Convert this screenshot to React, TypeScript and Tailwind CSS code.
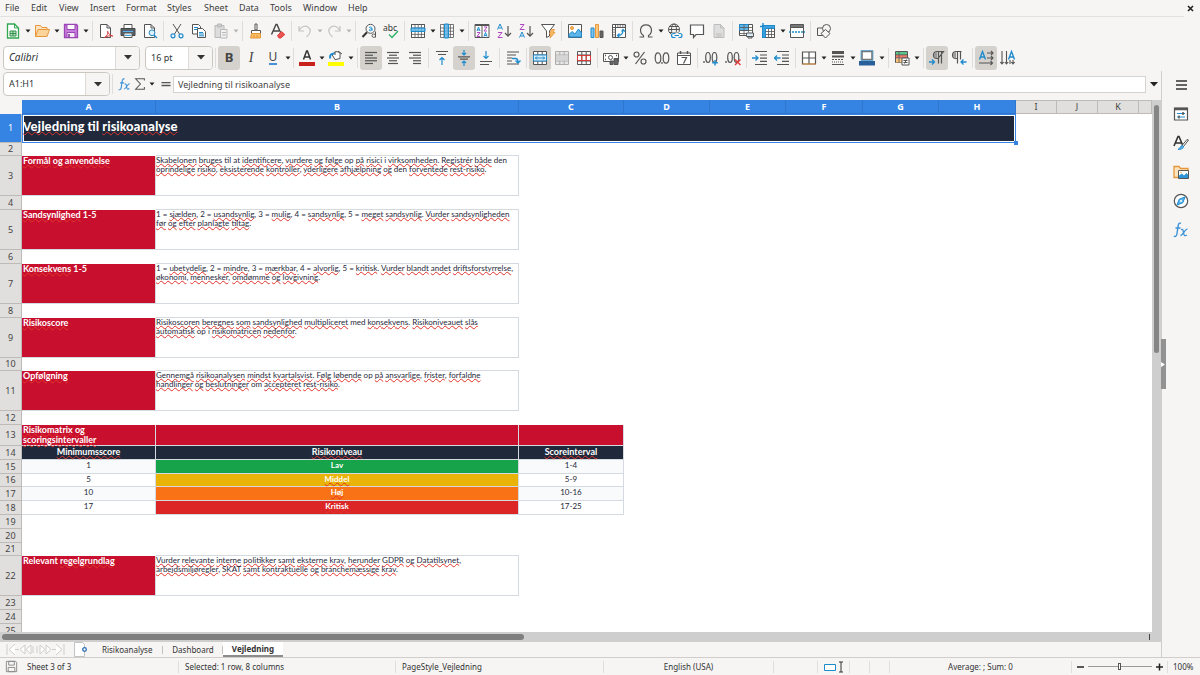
import type { ReactNode } from "react";

const INK = "#555555";
const BLUE = "#1e8bcd";
const PURPLE = "#b146c2";

function Icon({ children, size = 16 }: { children: ReactNode; size?: number }) {
  return (
    <svg width={size} height={size} viewBox="0 0 16 16" fill="none" stroke={INK} strokeWidth="1" aria-hidden="true" className="shrink-0">
      {children}
    </svg>
  );
}

function Caret({ muted = false }: { muted?: boolean }) {
  return (
    <svg width="6" height="4" viewBox="0 0 6 4" aria-hidden="true" className="shrink-0">
      <path d="M.5 .5h5L3 3.6z" fill={muted ? "#b5b5b5" : "#222"} />
    </svg>
  );
}

const align = (rows: [number, number][]) => rows.map(([x, w], i) => <path key={i} d={`M${x} ${2.5 + i * 2.75}h${w}`} strokeWidth="1.2" />);
const gridLines = "M1.5 1.5h13v13h-13zM1.5 5h13M1.5 8.2h13M1.5 11.4h13M5 1.5v13M8.2 1.5v13M11.4 1.5v13";

const icons: Record<string, ReactNode> = {
  new: (<><path d="M2.500 1h7l4 4v10h-11z" stroke="#32a852" fill="#fff" strokeWidth="1.300" /><path d="M9.500 1v4h4" stroke="#32a852" /><path d="M5 8h6v5H5zM5 10.500h6M8 8v5" stroke="#2f8f48" fill="#bfe5c8" /></>),
  open: (<><path d="M1.500 13.500v-11h5l1.500 2h5v3" stroke="#e8963a" fill="#fbe3c0" /><path d="M1.500 13.500l2.500-7h11.500l-2.500 7z" stroke="#e8963a" fill="#fbd49b" /></>),
  save: (<><path d="M1.500 1.500h12l1 1v12h-13z" stroke="#9b45b5" fill="#c77ddb" strokeWidth="1.300" /><path d="M4 1.500h8v5H4z" fill="#fff" stroke="#9b45b5" /><path d="M4 9.500h8v5H4z" fill="#f5e8f8" stroke="#9b45b5" /><path d="M6 11v3" stroke="#7a2f92" strokeWidth="1.500" /></>),
  pdf: (<><path d="M2.500 1.500h6.500l3.500 3.500v9.500h-10z" fill="#fff" /><path d="M9 1.500V5h3.500" /><path d="M6.500 14.500C9 13 10.500 10 9.800 8.500s-1 2.500 5 4.500c-3-.6-6 0-8.300 1.500z" stroke="#d83b3b" /></>),
  print: (<><path d="M4 5.500v-4h8v4" fill="#fff" /><path d="M1 5.500h14v7H1z" fill="#55606b" stroke="#444" /><path d="M3 8.500h10" stroke="#5bb2e8" /><path d="M4 10h8v4.500H4z" fill="#fff" /><path d="M5 12.300h6" stroke={BLUE} /></>),
  preview: (<><path d="M2.500 1.500h6.500l3.500 3.500v9.500h-10z" fill="#fff" /><path d="M9 1.500V5h3.500" /><circle cx="10" cy="9.800" r="2.900" fill="#dff0fb" stroke={BLUE} /><path d="M12 12l3 3" stroke={BLUE} strokeWidth="1.300" /></>),
  cut: (<><path d="M4 1l6.500 10M12 1L5.500 11" /><circle cx="4" cy="12.800" r="2" stroke={BLUE} strokeWidth="1.200" /><circle cx="12" cy="12.800" r="2" stroke={BLUE} strokeWidth="1.200" /></>),
  copy: (<><path d="M1.500 1.500h6l2 2v7.500h-8z" fill="#fff" /><path d="M3 4.500h4M3 6.500h4" stroke={BLUE} /><path d="M6.500 5.500h5l3 3v6h-8z" fill="#fff" /><path d="M8 9.500h4M8 11h5M8 12.800h5" stroke={BLUE} /></>),
  paste: (<><path d="M2 2.500h9v12H2z" fill="#ddd" stroke="#b9b9b9" /><path d="M4.500 1h4v3h-4z" fill="#ccc" stroke="#b9b9b9" /><path d="M7.500 6.500h6.500v8.500H7.500z" fill="#f2f2f2" stroke="#b9b9b9" /><path d="M9 9.500h4M9 12h4" stroke="#b9b9b9" /></>),
  clone: (<><path d="M7 1h2v6H7z" fill="#fff" /><path d="M3.500 7.500h9v3h-9z" fill="#fff" /><path d="M3.500 10.500L2.500 15h10v-4.500z" fill="#f9bd63" stroke="#e8963a" /><path d="M6 12v3M9 12v3" stroke="#e8963a" /></>),
  clear: (<><path d="M1.500 11.500L6 1.500h1L10.500 9.500M3.500 8h5.500" strokeWidth="1.400" stroke="#444" /><path d="M7.500 12.500l4-4 3.300 3-4 3.500H9z" fill="#ee5555" stroke="#d83b3b" /></>),
  undo: (<path d="M2 3v5h5M2.200 7.500C4 3.500 8 2 11 4s3.500 6-1.500 10" stroke="#c4c4c4" strokeWidth="1.200" />),
  redo: (<path d="M14 3v5H9M13.800 7.500C12 3.500 8 2 5 4S1.500 10 6.500 14" stroke="#c4c4c4" strokeWidth="1.200" />),
  find: (<><circle cx="9.500" cy="5.800" r="4.500" fill="#fff" /><path d="M6 9.300L1.500 14" strokeWidth="2" stroke="#333" /><path d="M8 4.500c2-1 3-.3 3 1v2.300M11 5.800c-3-.3-3.500 2 -1.800 2 .8 0 1.800-.6 1.800-1.500" stroke={BLUE} /><path d="M14.500 8.500v6M14.500 12c-.5-1.600-3.500-1.300-3.500.7s3 2.200 3.500.6" /></>),
  spell: (<><text x="0" y="7.500" fontSize="8.500" fill="#333" stroke="none" fontFamily="Noto Sans, sans-serif">abc</text><path d="M6 11.500l3 3 6-6.500" stroke="#32b36a" strokeWidth="1.400" /></>),
  row: (<><path d="M1.500 1.500h13v13h-13z" fill="#fff" /><path d={gridLines} strokeWidth=".8" /><path d="M1 5h14v3.500H1z" fill="#5db5ea" fillOpacity=".8" stroke={BLUE} /></>),
  col: (<><path d={gridLines} strokeWidth=".8" fill="#fff" /><path d="M5.500 1h4v14h-4z" fill="#5db5ea" fillOpacity=".85" stroke={BLUE} /></>),
  sort: (<><path d="M1 1.500h14v13H1zM8 1.500v13" fill="#fff" /><path d="M1 2h14" strokeWidth="2" /><path d="M3 8l1.500-4L6 8M3.500 7h2" stroke={BLUE} /><path d="M3 9.500h3l-3 4h3" stroke={PURPLE} /><path d="M10 4h3l-3 4h3" stroke={PURPLE} /><path d="M10 13.500l1.500-4 1.500 4M10.500 12.500h2" stroke={BLUE} /></>),
  asc: (<><path d="M1.500 6.500L4 1l2.500 5.500M2.500 5h3" stroke={BLUE} /><path d="M2 9.500h4l-4 5h4.500" stroke={PURPLE} /><path d="M12 3v10M9 10l3 3.200L15 10" strokeWidth="1.200" /></>),
  desc: (<><path d="M2 1.500h4l-4 5h4.500" stroke={PURPLE} /><path d="M1.500 14.500L4 9l2.500 5.500M2.500 13h3" stroke={BLUE} /><path d="M12 3v10M9 10l3 3.200L15 10" strokeWidth="1.200" /></>),
  filter: (<><path d="M1.500 1.500h13L9.500 8v5l-3 1.500V8z" fill="#fff" /><path d="M11.500 6.500h3l-1.500 3h2l-5 5.500 1-4h-1.500z" fill="#f9bd63" stroke="#e8963a" strokeWidth=".8" /></>),
  image: (<><path d="M1.500 1.500h13v13h-13z" fill="#fff" /><circle cx="5" cy="5" r="1.500" fill="#f9bd63" stroke="#e8963a" /><path d="M2 14v-2.500l3-3 3 2.500 3.500-5 3 4V14z" fill="#5db5ea" stroke={BLUE} /></>),
  chart: (<><path d="M2 5h3v9.500H2z" fill="#7cc3ee" stroke={BLUE} /><path d="M6.500 1.500h3v13h-3z" fill="#fbc77e" stroke="#e8963a" /><path d="M11 8h3v6.500h-3z" fill="#666" /></>),
  pivot: (<><path d="M1.500 1.500h13v13h-13zM1.500 4.500h13M4.500 1.500v13" fill="#fff" /><path d="M6 3h8M3 6v8" strokeDasharray="1.500 1" /><path d="M7 12.500c3.500 0 5-1.500 5-5.500M10.500 8.500L12 6.500l2 2M8.500 10.500l-2 2 2 2" stroke={BLUE} strokeWidth="1.200" /></>),
  omega: (<path d="M1.500 14h4v-1.500C1 10 1.500 1.800 8 1.800S15 10 10.500 12.500V14h4" strokeWidth="1.200" />),
  link: (<><circle cx="7" cy="6.500" r="5.500" /><ellipse cx="7" cy="6.500" rx="2.500" ry="5.500" /><path d="M1.500 6.500h11M2.500 3.500h9M2.500 9.500h9" /><path d="M5 9.500h10.500v6H4z" fill="#f6f5f4" stroke="none" /><path d="M8.500 10.500H6.500a2 2 0 000 4h2M11.500 10.500H13a2 2 0 010 4h-1.500M7.500 12.500h4.500" stroke={BLUE} strokeWidth="1.200" /></>),
  comment: (<path d="M1.500 2h13v9.500H7L4.500 14.500v-3h-3z" fill="#fff" strokeWidth="1.200" />),
  header: (<><path d="M3 1.500h6.500L13 5v9.500H3z" fill="#dedede" stroke="#bdbdbd" /><path d="M9.500 1.500V5H13M5 11h6M5 13h6" stroke="#bdbdbd" /></>),
  printarea: (<><path d="M1.500 1.500h13v11h-13z" fill="#fff" /><path d="M1.500 1.500h9v6h-9z" fill="#5db5ea" stroke={BLUE} /><path d="M1.500 4.500h13M1.500 7.500h13M1.500 10.500h8M6 1.500v11M10.500 1.500v8" strokeWidth=".8" /><path d="M8.500 10h7v3.500h-7zM10 13.500h4V15h-4z" fill="#d9ecf8" /></>),
  freeze: (<><path d="M2.500 2.500h12v12h-12z" fill="#fff" /><path d="M2.500 2.500h12v3h-9v9h-3z" fill="#3a9fdf" stroke={BLUE} /><path d="M5.500 8.500h9M5.500 11.500h9M8.500 5.500v9M11.500 5.500v9M14.500 5.500v9h-9" strokeWidth=".8" /><path d="M0 3.500h4M3 0v4" stroke={BLUE} strokeWidth="1.400" /></>),
  split: (<><path d="M1.500 4.500v10h13v-10" fill="#fff" /><path d="M1.500 1.500h13v3h-13z" fill="#777" /><path d="M0 9h16" stroke={BLUE} strokeDasharray="2 1" strokeWidth="1.300" /></>),
  shapes: (<><path d="M1.500 5h8v7.500h-8z" /><circle cx="10.500" cy="5.500" r="4" fill="#f6f5f4" /><path d="M9.500 6.500l4.500 4-4.500 4.500L5 10.500z" fill="#f6f5f4" /></>),
  fontcolor: (<><path d="M4.500 9.500L7.600 1h.8l3.100 8.500M5.500 7h5" strokeWidth="1.500" stroke="#333" /><path d="M0 12h16v4H0z" fill="#c9211e" stroke="none" /></>),
  highlight: (<><path d="M4 4.500l4-3 4 1v6l-5 1.200z" fill="#fff" /><path d="M7 5V1.500M10 1l4 3" /><path d="M2.200 8.500C1.500 5 3 3.500 6.500 3.500" stroke={BLUE} strokeWidth="2" /><path d="M0 12h16v4H0z" fill="#ffff00" stroke="none" /></>),
  left: align([[2, 12], [2, 8], [2, 12], [2, 12], [2, 8]]),
  center: align([[2, 12], [4, 8], [2, 12], [4, 8], [3, 10]]),
  right: align([[2, 12], [6, 8], [2, 12], [6, 8], [6, 8]]),
  top: (<><path d="M2 1.500h12M4 4.500h8" strokeWidth="1.200" /><path d="M8 15V7.500M5.500 10L8 7.500l2.500 2.500" stroke={BLUE} strokeWidth="1.200" /></>),
  middle: (<><path d="M2 6.800h12M4 9.200h8" strokeWidth="1.200" /><path d="M8 0v5M6 3l2 2 2-2M8 16v-5M6 13l2-2 2 2" stroke={BLUE} strokeWidth="1.200" /></>),
  bottom: (<><path d="M2 11.500h12M2 14.500h9" strokeWidth="1.200" /><path d="M8 1v7.500M5.500 6L8 8.500 10.500 6" stroke={BLUE} strokeWidth="1.200" /></>),
  wrap: (<><path d="M2 2h12M2 5h9M2 8h5M2 11h5M2 14h12" strokeWidth="1.200" /><path d="M7 8.500h3.500q2.500 0 2.500 3.500M10.500 10.500L13 13l2.500-2.500" stroke={BLUE} strokeWidth="1.300" /></>),
  merge: (<><path d="M1.500 1.500h13v13h-13zM1.500 5h13M1.500 11h13M5.800 1.500V5M10.200 1.500V5M5.800 11v3.500M10.200 11v3.500" fill="#fff" /><path d="M1.500 5h13v6h-13z" fill="#d9ecf8" stroke={BLUE} /><path d="M3 8h10M5 6.500L3.500 8 5 9.500M11 6.500L12.500 8 11 9.500" stroke={BLUE} /></>),
  mergecells: (<><path d="M1.500 1.500h13v13h-13zM1.500 5h13M1.500 11h13M5.800 1.500V5M10.200 1.500V5M5.800 11v3.500M10.200 11v3.500" fill="#e6e6e6" stroke="#adadad" /><path d="M2 5.500h12v5H2z" fill="#d5d5d5" stroke="none" /></>),
  unmerge: (<><path d="M1.500 1.500h13v13h-13zM1.500 5h13M1.500 11h13M5.800 1.500v13M10.200 1.500v13" fill="#fff" /><path d="M1.500 5.500h13v5h-13zM5.800 5.500v5M10.200 5.500v5" stroke="#d83b3b" /></>),
  currency: (<><path d="M.5 3.500h15v8H.5z" fill="#fff" /><path d="M2 5.500h1M13 5.500h1M2 9.500h1" strokeWidth="1.500" /><circle cx="7.500" cy="7.500" r="2" /><path d="M7 11h3v3.500H7zM11 8.500h4v6h-4z" fill="#666" /></>),
  percent: (<><circle cx="4.500" cy="4.500" r="2.500" strokeWidth="1.200" /><circle cx="11.500" cy="11.500" r="2.500" strokeWidth="1.200" /><path d="M12.500 2l-9 12" strokeWidth="1.200" /></>),
  number: (<><ellipse cx="4" cy="8" rx="2.800" ry="5.200" strokeWidth="1.200" /><ellipse cx="12" cy="8" rx="2.800" ry="5.200" strokeWidth="1.200" /><path d="M8 12v2" strokeWidth="1.200" /></>),
  date: (<><path d="M1.500 3h13v11.500h-13zM1.500 5.500h13" fill="#fff" /><path d="M4.500 1v3M11.500 1v3" strokeWidth="1.500" /><path d="M5.500 7.500h5l-3 6" strokeWidth="1.200" /></>),
  adddec: (<><path d="M1 11v2" strokeWidth="1.300" /><ellipse cx="5" cy="7.500" rx="2.300" ry="5" strokeWidth="1.200" /><ellipse cx="11.500" cy="7.500" rx="2.300" ry="5" strokeWidth="1.200" /><path d="M12 10v5.500M9.200 12.700h5.600" stroke={BLUE} strokeWidth="1.400" /></>),
  deldec: (<><path d="M1 11v2" strokeWidth="1.300" /><ellipse cx="5" cy="7.500" rx="2.300" ry="5" strokeWidth="1.200" /><ellipse cx="11.500" cy="7.500" rx="2.300" ry="5" strokeWidth="1.200" /><path d="M10 9.500l5.500 5.500M15.500 9.500L10 15" stroke="#e03c3c" strokeWidth="1.400" /></>),
  indent: (<><path d="M3 1.500h12M8 5h7M8 8.200h7M8 11.400h7M3 14.500h12" strokeWidth="1.200" /><path d="M0 8h6M3.500 5.500L6 8l-2.500 2.500" stroke={BLUE} strokeWidth="1.300" /></>),
  outdent: (<><path d="M3 1.500h12M8 5h7M8 8.200h7M8 11.400h7M3 14.500h12" strokeWidth="1.200" /><path d="M6.500 8h-6M3 5.500L.5 8 3 10.500" stroke={BLUE} strokeWidth="1.300" /></>),
  borders: (<><path d="M1.500 2h13v12h-13zM8 2v12M1.500 8h13" fill="#fff" strokeWidth="1.200" /><path d="M1.500 14h13" stroke="#e8963a" /></>),
  linestyle: (<><path d="M2 2.500h12" strokeWidth="3" /><path d="M2 6.500h12" strokeWidth="2" /><path d="M2 9.500h12" strokeDasharray="2 1" /><path d="M2 12h12" strokeDasharray="1 1" /><path d="M2 14.500h12" /></>),
  linecolor: (<><path d="M3 1.500h10v8H3z" fill="#fff" stroke="#777" strokeWidth="1.600" /><path d="M2 .5h12v10H2z" stroke={BLUE} strokeWidth=".6" /><path d="M0 11h16v4.500H0z" fill="#2a6099" stroke="none" /></>),
  cond: (<><path d="M1.500 1.500h12v11h-12z" fill="#fff" /><path d="M2 2h11v3H2z" fill="#58c68a" stroke="none" /><path d="M2 5h11v3H2z" fill="#ee7a6a" stroke="none" /><path d="M2 8.500h6v4H2z" fill="#fbc77e" stroke="none" /><path d="M1.500 4.800h12M1.500 8h12M5 1.500v11" strokeWidth=".8" /><path d="M8 8h7v7H8z" fill="#fff" /><path d="M9.500 10.500h4M9.500 12.500h4M12.500 9.500l-2 4" /></>),
  ltr: (<><path d="M14.500 1.500H8a3.200 3.200 0 000 7h1zM9.500 1.500v12M12.500 1.500v12" strokeWidth="1.200" /><path d="M8 2v6C4 8 4 2 8 2z" fill="#999" stroke="none" /><path d="M0 12h5M3 9.500L5.500 12 3 14.500" stroke={BLUE} strokeWidth="1.300" /></>),
  rtl: (<><path d="M10.500 1.500H5a3.200 3.200 0 000 7h1M6.500 1.500v12M9.500 1.500v8" strokeWidth="1.200" /><path d="M5 2v6C1 8 1 2 5 2z" fill="#999" stroke="none" /><path d="M15.500 12h-5M12.500 9.500L10 12l2.500 2.500" stroke={BLUE} strokeWidth="1.300" /></>),
  texth: (<><path d="M1.500 9.500L4.500 1.500 7.500 9.500M2.500 7h4" stroke={BLUE} strokeWidth="1.400" /><path d="M9 3h6M13 1l2 2-2 2M9 8h6M13 6l2 2-2 2M1 13h13.500M12.500 11l2 2-2 2" strokeWidth="1.100" /></>),
  textv: (<><path d="M8.500 9.500l3-8 3 8M9.500 7h4" stroke={BLUE} strokeWidth="1.400" /><path d="M2 1v13M.3 12L2 14l1.700-2M6.500 1v13M4.800 12l1.700 2 1.700-2M13 10v4M11.300 12l1.700 2 1.700-2M10 10v4" strokeWidth="1.100" /></>),
  props: (<><path d="M1.500 2h13v12h-13z" fill="#fff" strokeWidth="1.200" /><path d="M1.500 3h13" strokeWidth="2.500" /><path d="M4 7.500h8M4 11h8" stroke={BLUE} /><path d="M10 6v3M6 9.500v3" strokeWidth="1.500" /></>),
  styles: (<><path d="M1 11L5 1.500h1L10 11M2.500 8h6" strokeWidth="1.600" stroke="#333" /><path d="M15.500 5l-5 6.500-1.500-1 5-6z" fill="#fff" /><path d="M9.500 10.500c2 1 1 4-4.500 4 2-.8 2-3.500 4.500-4z" fill="#5db5ea" stroke={BLUE} /></>),
  gallery: (<><path d="M1 13.500v-11h5l1.500 2H15v9z" fill="#fbe3c0" stroke="#e8963a" strokeWidth="1.300" /><path d="M5.500 6.500h10v8h-10z" fill="#fff" /><path d="M6 14v-2.500l3-2 2 2L13.500 9l1.500 1.500V14z" fill="#2f93d6" stroke="none" /><circle cx="8" cy="8.500" r=".8" fill="#f9bd63" stroke="none" /></>),
  navigator: (<><circle cx="8" cy="8" r="6.700" fill="#fff" strokeWidth="1.200" /><path d="M12 4L9.800 9.800 4 12l2.200-5.800z" fill="#5db5ea" stroke={BLUE} /><circle cx="8" cy="8" r="1" fill="#fff" stroke="none" /></>),
  fx: (<><path d="M8 1.300C5.500.3 5.200 3 4.800 6L4 11.500C3.700 14 2.700 15 .8 14.200M2.500 6h5" stroke="#3d93d8" strokeWidth="1.400" /><path d="M8 7.500c2-.5 2 0 2.500 3s1 4 3.500 2.500M14.500 7.200C12 6.500 11 12 7.500 13.700" stroke="#3d93d8" strokeWidth="1.300" /></>),
  sigma: (<path d="M13 4V2H3l5.500 6L3 14h10v-2.500" strokeWidth="1.200" />),
  equals: (<path d="M2 6.200h12M2 10h12" strokeWidth="1.700" />),
  menu: (<path d="M3 4h11M3 8h11M3 12h11" strokeWidth="1.700" stroke="#333" />),
  disk: (<><path d="M2.500 2.500h10l1 1v10h-11z" stroke="#8a8a8a" /><path d="M5 2.500h6v4H5zM4.500 9h7v4.500h-7z" stroke="#8a8a8a" /></>),
};

type Tool = { icon: string; label: string; drop?: boolean; muted?: boolean; active?: boolean };
const t = (icon: string, label: string, drop = false, flags: Partial<Tool> = {}): Tool => ({ icon, label, drop, ...flags });

const standardBar: Tool[][] = [
  [t("new", "New", true), t("open", "Open", true), t("save", "Save", true)],
  [t("pdf", "Export as PDF"), t("print", "Print"), t("preview", "Print Preview")],
  [t("cut", "Cut"), t("copy", "Copy"), t("paste", "Paste", true, { muted: true })],
  [t("clone", "Clone Formatting"), t("clear", "Clear Formatting")],
  [t("undo", "Undo", true, { muted: true }), t("redo", "Redo", true, { muted: true })],
  [t("find", "Find and Replace"), t("spell", "Spelling")],
  [t("row", "Row", true), t("col", "Column", true)],
  [t("sort", "Sort"), t("asc", "Sort Ascending"), t("desc", "Sort Descending"), t("filter", "AutoFilter")],
  [t("image", "Insert Image"), t("chart", "Insert Chart"), t("pivot", "Pivot Table")],
  [t("omega", "Special Character", true), t("link", "Hyperlink"), t("comment", "Comment"), t("header", "Headers and Footers", false, { muted: true })],
  [t("printarea", "Print Area"), t("freeze", "Freeze Rows and Columns", true), t("split", "Split Window")],
  [t("shapes", "Draw Functions")],
];

const formatBar: Tool[][] = [
  [t("fontcolor", "Font Color", true), t("highlight", "Background Color", true)],
  [t("left", "Align Left", false, { active: true }), t("center", "Center"), t("right", "Align Right")],
  [t("top", "Align Top"), t("middle", "Center Vertically", false, { active: true }), t("bottom", "Align Bottom")],
  [t("wrap", "Wrap Text")],
  [t("merge", "Merge and Center", false, { active: true }), t("mergecells", "Merge Cells"), t("unmerge", "Unmerge Cells")],
  [t("currency", "Currency", true), t("percent", "Percent"), t("number", "Number"), t("date", "Date")],
  [t("adddec", "Add Decimal Place"), t("deldec", "Delete Decimal Place")],
  [t("indent", "Increase Indent"), t("outdent", "Decrease Indent")],
  [t("borders", "Borders", true), t("linestyle", "Border Style", true), t("linecolor", "Border Color", true)],
  [t("cond", "Conditional Formatting", true)],
  [t("ltr", "Left to Right", false, { active: true }), t("rtl", "Right to Left")],
  [t("texth", "Text Horizontal", false, { active: true }), t("textv", "Text Vertical")],
];

function Separator() {
  return <span className="flex w-[5px] shrink-0 justify-center"><span className="h-5 w-px bg-[#dfdddb]" /></span>;
}

function ToolButton({ tool, children }: { tool: Tool; children?: ReactNode }) {
  return (
    <>
      <button aria-label={tool.label} aria-pressed={tool.active} className={`flex h-6 w-[22px] shrink-0 items-center justify-center rounded-[3px] ${tool.active ? "bg-[#d5d1cd]" : ""}`}>
        {children ?? <Icon>{icons[tool.icon]}</Icon>}
      </button>
      {tool.drop && (
        <button aria-label={`${tool.label} options`} className="flex h-6 w-[7px] shrink-0 items-center justify-end">
          <Caret muted={tool.muted} />
        </button>
      )}
    </>
  );
}

function ToolGroups({ groups }: { groups: Tool[][] }) {
  return groups.map((group, i) => (
    <div key={i} className="flex shrink-0 items-center">
      {i > 0 && <Separator />}
      {group.map((tool) => <ToolButton key={tool.icon} tool={tool} />)}
      {group[group.length - 1].drop && <span className="w-px" />}
    </div>
  ));
}

function Combo({ label, value, width, size = "text-[9px]" }: { label: string; value: string; width: string; size?: string }) {
  return (
    <div className={`flex h-6 shrink-0 overflow-hidden rounded-[4px] border border-[#cdc7c2] bg-white ${width}`}>
      <input aria-label={label} defaultValue={value} className={`min-w-0 flex-1 pl-[5px] text-[#2e3436] outline-none ${size}`} />
      <button aria-label={`${label} list`} className="flex w-6 items-center justify-center border-l border-[#dedad7] bg-[#f6f5f4]">
        <svg width="8" height="5" viewBox="0 0 8 5" aria-hidden="true"><path d="M0 0h8L4 4.600z" fill="#333" /></svg>
      </button>
    </div>
  );
}

/* Bracketed runs are flagged by the spelling checker. */
function Spelled({ text }: { text: string }) {
  return text.split(/(\[[^\]]*\])/).map((part, i) =>
    part.startsWith("[") ? (
      <span key={i} className="underline decoration-[#e0342c] decoration-wavy decoration-1 underline-offset-0 [text-decoration-skip-ink:none]">{part.slice(1, -1)}</span>
    ) : part
  );
}

const columns = [
  ["A", "w-[134px]"], ["B", "w-[363px]"], ["C", "w-[105px]"], ["D", "w-[86px]"], ["E", "w-[76px]"], ["F", "w-[77px]"],
  ["G", "w-[76px]"], ["H", "w-[77px]"], ["I", "w-[41px]"], ["J", "w-[41px]"], ["K", "w-[41px]"], ["", ""],
];

type Row =
  | { kind: "title" | "empty"; h: string }
  | { kind: "note"; h: string; head: string; lines: string[] }
  | { kind: "band" | "head"; h: string }
  | { kind: "level"; h: string; min: string; name: string; range: string; color: string; tint: string };

const empty = (h = "h-[14px]"): Row => ({ kind: "empty", h });
const note = (head: string, ...lines: string[]): Row => ({ kind: "note", h: "h-[40px]", head, lines });
const level = (min: string, name: string, range: string, color: string, tint: string, h = "h-[14px]"): Row => ({ kind: "level", h, min, name, range, color, tint });

const rows: Row[] = [
  { kind: "title", h: "h-[29px]" },
  empty("h-[13px]"),
  note("[Formål] [og] [anvendelse]", "[Skabelonen] [bruges] til at [identificere], [vurdere] [og] [følge] op [på] [risici] i [virksomheden]. [Registrér] [både] den", "[oprindelige] [risiko], [eksisterende] [kontroller], [yderligere] [afhjælpning] [og] den [forventede] [rest-risiko]."),
  empty(),
  note("[Sandsynlighed] 1-5", "1 = [sjælden], 2 = [usandsynlig], 3 = [mulig], 4 = [sandsynlig], 5 = [meget] [sandsynlig]. [Vurder] [sandsynligheden]", "[før] [og] [efter] [planlagte] [tiltag]."),
  empty(),
  note("[Konsekvens] 1-5", "1 = [ubetydelig], 2 = [mindre], 3 = [mærkbar], 4 = [alvorlig], 5 = [kritisk]. [Vurder] [blandt] [andet] [driftsforstyrrelse],", "[økonomi], [mennesker], [omdømme] [og] [lovgivning]."),
  empty(),
  note("[Risikoscore]", "[Risikoscoren] [beregnes] [som] [sandsynlighed] [multipliceret] med [konsekvens]. [Risikoniveauet] [slås]", "[automatisk] op i [risikomatricen] [nedenfor]."),
  empty("h-[13px]"),
  note("[Opfølgning]", "[Gennemgå] [risikoanalysen] [mindst] [kvartalsvist]. [Følg] [løbende] op [på] [ansvarlige], [frister], [forfaldne]", "[handlinger] [og] [beslutninger] om [accepteret] [rest-risiko]."),
  empty(),
  { kind: "band", h: "h-[21px]" },
  { kind: "head", h: "h-[14px]" },
  level("1", "Lav", "1-4", "bg-[#16a34a]", "bg-[#f8fafc]"),
  level("5", "[Middel]", "5-9", "bg-[#eab308]", "bg-white", "h-[13px]"),
  level("10", "[Høj]", "10-16", "bg-[#f97316]", "bg-[#f8fafc]"),
  level("17", "[Kritisk]", "17-25", "bg-[#dc2626]", "bg-white"),
  empty(), empty(),
  empty("h-[13px]"),
  note("Relevant [regelgrundlag]", "[Vurder] [relevante] [interne] [politikker] [samt] [eksterne] [krav], [herunder] [GDPR] [og] [Datatilsynet],", "[arbejdsmiljøregler], [SKAT] [samt] [kontraktuelle] [og] [branchemæssige] [krav]."),
  empty(), empty(), empty(),
];

const line = "border-r border-b border-[#d5dae0]";
const rowHead = "border-r border-b border-[#bdbab7] p-0 text-center align-middle text-[9px] leading-[12px] font-normal";

function Cells({ row }: { row: Row }) {
  switch (row.kind) {
    case "title":
      return (
        <>
          <td colSpan={8} className="relative bg-[#1f293b] p-0 align-middle shadow-[inset_0_0_0_1px_#3584e4,inset_0_0_0_2px_#fff]">
            <div className="pb-[3px] pl-px font-['Carlito','Lato',sans-serif] text-[14px] leading-[18px] font-bold text-white"><Spelled text="[Vejledning] til [risikoanalyse]" /></div>
            <span className="absolute -right-[2px] -bottom-[2px] z-10 size-[4px] bg-[#3584e4]" />
          </td>
          <td colSpan={4} />
        </>
      );
    case "note":
      return (
        <>
          <td className={`bg-[#c8102e] p-0 pl-px align-top text-[9px] leading-[9px] font-bold text-white ${line}`}><Spelled text={row.head} /></td>
          <td className={`bg-white p-0 align-top text-[8px] leading-[9px] whitespace-nowrap text-[#1f293b] shadow-[0_-1px_0_#d5dae0] ${line}`}>
            {row.lines.map((l) => <div key={l}><Spelled text={l} /></div>)}
          </td>
          <td colSpan={10} />
        </>
      );
    case "band":
      return (
        <>
          <td className={`bg-[#c8102e] p-0 pl-px align-top text-[9px] leading-[10px] font-bold text-white ${line}`}>
            <div><Spelled text="[Risikomatrix] [og]" /></div>
            <div><Spelled text="[scoringsintervaller]" /></div>
          </td>
          <td className={`bg-[#c8102e] ${line}`} />
          <td className={`bg-[#c8102e] ${line}`} />
          <td colSpan={9} />
        </>
      );
    case "head":
      return (
        <>
          {["[Minimumsscore]", "[Risikoniveau]", "[Scoreinterval]"].map((h) => (
            <td key={h} className={`bg-[#1f293b] p-0 text-center align-top text-[9px] leading-[11px] font-bold text-white ${line}`}><Spelled text={h} /></td>
          ))}
          <td colSpan={9} />
        </>
      );
    case "level":
      return (
        <>
          <td className={`p-0 text-center align-top text-[8px] leading-[11px] text-[#1f293b] ${line} ${row.tint}`}>{row.min}</td>
          <td className={`p-0 text-center align-top text-[8px] leading-[11px] font-bold text-white ${line} ${row.color}`}><Spelled text={row.name} /></td>
          <td className={`p-0 text-center align-top text-[8px] leading-[11px] text-[#1f293b] ${line} ${row.tint}`}>{row.range}</td>
          <td colSpan={9} />
        </>
      );
    default:
      return <td colSpan={12} />;
  }
}

function Sheet() {
  return (
    <div className="min-h-0 flex-1 overflow-hidden bg-white">
      <table className="w-full table-fixed border-separate border-spacing-0 font-['Lato',sans-serif]">
        <colgroup>
          <col className="w-[22px]" />
          {columns.map(([name, w]) => <col key={name} className={w} />)}
        </colgroup>
        <thead className="font-['Noto_Sans',sans-serif]">
          <tr className="h-[14px] text-[9px] leading-[12px]">
            <th className="bg-[#f6f5f4] p-0" />
            {columns.map(([name], i) => (
              <th key={name} scope="col" className={`border-r border-b p-0 ${i < 8 ? "border-[#2f76cd] bg-[#3584e4] font-bold text-white" : "border-t border-[#bdbab7] bg-[#e1dfdd] font-normal text-[#444]"}`}>{name}</th>
            ))}
          </tr>
        </thead>
        <tbody>
          {rows.map((row, i) => (
            <tr key={i} className={row.h}>
              <th scope="row" className={`font-['Noto_Sans',sans-serif] ${rowHead} ${i === 0 ? "bg-[#3584e4] font-bold text-white" : "bg-[#e1dfdd] text-[#444]"}`}>{i + 1}</th>
              <Cells row={row} />
            </tr>
          ))}
        </tbody>
      </table>
    </div>
  );
}

function SheetTabs() {
  return (
    <div className="flex h-4 shrink-0 items-stretch border-b border-[#d0cdca] text-[8px] leading-[14px] text-[#333]">
      <button aria-label="Scroll tabs" className="ml-[6px] w-[62px]">
        <svg width="60" height="13" viewBox="0 0 60 13" fill="#fff" stroke="#cfcdcb" aria-hidden="true">
          <path d="M1 1v11M9 1L3 6.500 9 12M9 6.500h4M19 2l-5 4.500 5 4.500zM25 2l-5 4.500 5 4.500zM27 3v7M31 3v7M34 2l5 4.500-5 4.500zM40 2l5 4.500-5 4.500zM46 6.500h4M50 1l6 5.500-6 5.500M58 1v11" />
        </svg>
      </button>
      <button aria-label="Add sheet" className="ml-[6px] w-[14px]">
        <svg width="14" height="15" viewBox="0 0 14 15" aria-hidden="true">
          <path d="M.5.500h8l2 2v12H.5z" fill="#fff" stroke="#c4c4c4" />
          <circle cx="10.500" cy="7.500" r="1.800" fill="#fff" stroke="#2a6cb5" strokeWidth="1.300" />
        </svg>
      </button>
      <button className="ml-[14px] w-[50px]">Risikoanalyse</button>
      <span className="ml-[10px] h-2 w-px self-center bg-[#c4c1be]" />
      <button className="ml-[9px] w-[42px]">Dashboard</button>
      <span className="ml-[8px] h-2 w-px self-center bg-[#c4c1be]" />
      <button className="w-[60px] border-b-2 border-[#8b8b8b] bg-white font-bold">Vejledning</button>
    </div>
  );
}

function StatusBar() {
  const cell = "border-l border-[#e0dedc] h-3 flex items-center";
  return (
    <footer className="flex h-[17px] shrink-0 items-center text-[8px] leading-[12px] text-[#333]">
      <span className="flex w-[20px] justify-end pr-px"><Icon size={15}>{icons.disk}</Icon></span>
      <span className="w-[158px] pl-[7px]">Sheet 3 of 3</span>
      <span className={`${cell} w-[217px] pl-[6px]`}>Selected: 1 row, 8 columns</span>
      <span className={`${cell} w-[208px] pl-[6px]`}>PageStyle_Vejledning</span>
      <span className={`${cell} w-[170px] justify-center`}>English (USA)</span>
      <span className={`${cell} w-[44px]`} />
      <span className={`${cell} w-[32px] justify-center`}>
        <svg width="20" height="12" viewBox="0 0 20 12" fill="none" aria-hidden="true">
          <path d="M.5 3.500h11v6H.5z" stroke={BLUE} fill="#fff" />
          <path d="M15 1h4M17 1v10M15 11h4" stroke="#333" />
        </svg>
      </span>
      <span className={`${cell} w-[20px]`} />
      <span className={`${cell} w-[20px]`} />
      <span className={`${cell} min-w-0 flex-1 justify-center`}>Average: ; Sum: 0</span>
      <div className={`${cell} w-[96px] gap-[4px] pl-[5px]`}>
        <button aria-label="Zoom out" className="flex"><svg width="7" height="8" viewBox="0 0 7 8" aria-hidden="true"><path d="M0 4h7" stroke="#222" strokeWidth="1.500" /></svg></button>
        <input type="range" min="0" max="100" defaultValue="49" aria-label="Zoom" className="h-2 w-[64px] appearance-none bg-transparent [&::-webkit-slider-runnable-track]:h-px [&::-webkit-slider-runnable-track]:bg-[#999] [&::-webkit-slider-thumb]:-mt-[3px] [&::-webkit-slider-thumb]:h-[7px] [&::-webkit-slider-thumb]:w-[3px] [&::-webkit-slider-thumb]:appearance-none [&::-webkit-slider-thumb]:border [&::-webkit-slider-thumb]:border-[#555] [&::-webkit-slider-thumb]:bg-white" />
        <button aria-label="Zoom in" className="flex"><svg width="7" height="8" viewBox="0 0 7 8" aria-hidden="true"><path d="M0 4h7M3.500 .5v7" stroke="#222" strokeWidth="1.500" /></svg></button>
      </div>
      <span className={`${cell} w-[33px] pl-[5px]`}>100%</span>
    </footer>
  );
}

const menus = [
  ["File", "w-[26px]"], ["Edit", "w-[28px]"], ["View", "w-[31px]"], ["Insert", "w-[36px]"], ["Format", "w-[41px]"], ["Styles", "w-[37px]"],
  ["Sheet", "w-[35px]"], ["Data", "w-[31px]"], ["Tools", "w-[33px]"], ["Window", "w-[45px]"], ["Help", "w-[30px]"],
];

export default function App() {
  return (
    <div className="flex h-screen flex-col overflow-hidden bg-[#f6f5f4] font-['Noto_Sans',sans-serif] text-[#2e3436]">
      <nav className="mr-4 flex h-[17px] shrink-0 items-center border-b border-[#e3e1df] pl-[5px] text-[9px] leading-[12px] text-[#3d3d3d]">
        {menus.map(([name, w]) => <button key={name} className={`text-left ${w}`}>{name}</button>)}
        <button aria-label="Close document" className="-mr-[10px] ml-auto flex">
          <svg width="7" height="7" viewBox="0 0 7 7" aria-hidden="true"><path d="M1 1l5 5M6 1L1 6" stroke="#222" strokeWidth="1.600" /></svg>
        </button>
      </nav>

      <div role="toolbar" aria-label="Standard" className="flex h-[27px] shrink-0 items-center pl-[2px]">
        <ToolGroups groups={standardBar} />
      </div>

      <div role="toolbar" aria-label="Formatting" className="flex h-[27px] shrink-0 items-center pl-[3px]">
        <Combo label="Font Name" value="Calibri" width="w-[137px]" size="text-[10px] italic" />
        <span className="w-[5px] shrink-0" />
        <Combo label="Font Size" value="16 pt" width="w-[68px]" />
        <Separator />
        <ToolButton tool={t("bold", "Bold", false, { active: true })}><span className="text-[13px] font-bold text-[#444]">B</span></ToolButton>
        <ToolButton tool={t("italic", "Italic")}><span className="font-['Liberation_Serif',serif] text-[14px] text-[#444] italic">I</span></ToolButton>
        <ToolButton tool={t("underline", "Underline", true)}><span className="border-b-2 border-[#4a90d9] text-[12px] leading-[12px] text-[#444]">U</span></ToolButton>
        <Separator />
        <ToolGroups groups={formatBar} />
      </div>

      <div className="flex min-h-0 flex-1">
        <main className="flex min-w-0 flex-1 flex-col">
          <div className="flex h-[29px] shrink-0 items-center pb-[3px] pl-[3px]">
            <Combo label="Name Box" value="A1:H1" width="w-[107px]" />
            <Separator />
            <button aria-label="Function Wizard" className="flex w-[18px] justify-center"><Icon size={13}>{icons.fx}</Icon></button>
            <button aria-label="Select Function" className="flex w-[25px] items-center gap-[2px]"><Icon size={14}>{icons.sigma}</Icon><Caret /></button>
            <button aria-label="Formula" className="flex w-[15px] justify-center"><Icon size={12}>{icons.equals}</Icon></button>
            <input aria-label="Input line" defaultValue="Vejledning til risikoanalyse" className="h-[17px] min-w-0 flex-1 border border-[#d5d2cf] bg-white pl-[4px] text-[9px] text-[#444] outline-none" />
            <button aria-label="Expand Formula Bar" className="flex w-[15px] justify-center">
              <svg width="8" height="5" viewBox="0 0 8 5" aria-hidden="true"><path d="M0 0h8L4 4.600z" fill="#222" /></svg>
            </button>
          </div>
          <div className="flex min-h-0 flex-1">
            <Sheet />
            <div className="w-[9px] shrink-0 bg-[#cecece] px-[2px] pt-[5px]">
              <div className="h-[47%] rounded-full bg-[#858585]" />
            </div>
          </div>
          <div className="flex h-[10px] shrink-0 items-center bg-[#cecece] py-[2px] pr-[11px] pl-[2px]">
            <div className="h-[6px] w-5/11 rounded-full bg-[#7f7f7f]" />
            <span className="ml-auto h-[6px] w-px bg-[#444]" />
          </div>
          <SheetTabs />
        </main>

        <aside className="relative flex w-[39px] shrink-0 flex-col items-center gap-[13px] border-b border-l border-[#d0cdca] pt-[6px]">
          {["menu", "props", "styles", "gallery", "navigator", "fx"].map((name) => (
            <button key={name} aria-label={name} className="flex"><Icon>{icons[name]}</Icon></button>
          ))}
          <button aria-label="Hide sidebar" className="absolute top-[268px] -left-px flex h-[50px] w-[5px] items-center bg-[#929292]">
            <svg width="4" height="5" viewBox="0 0 4 5" aria-hidden="true"><path d="M0 0l4 2.500L0 5z" fill="#fff" /></svg>
          </button>
        </aside>
      </div>
      <StatusBar />
    </div>
  );
}
